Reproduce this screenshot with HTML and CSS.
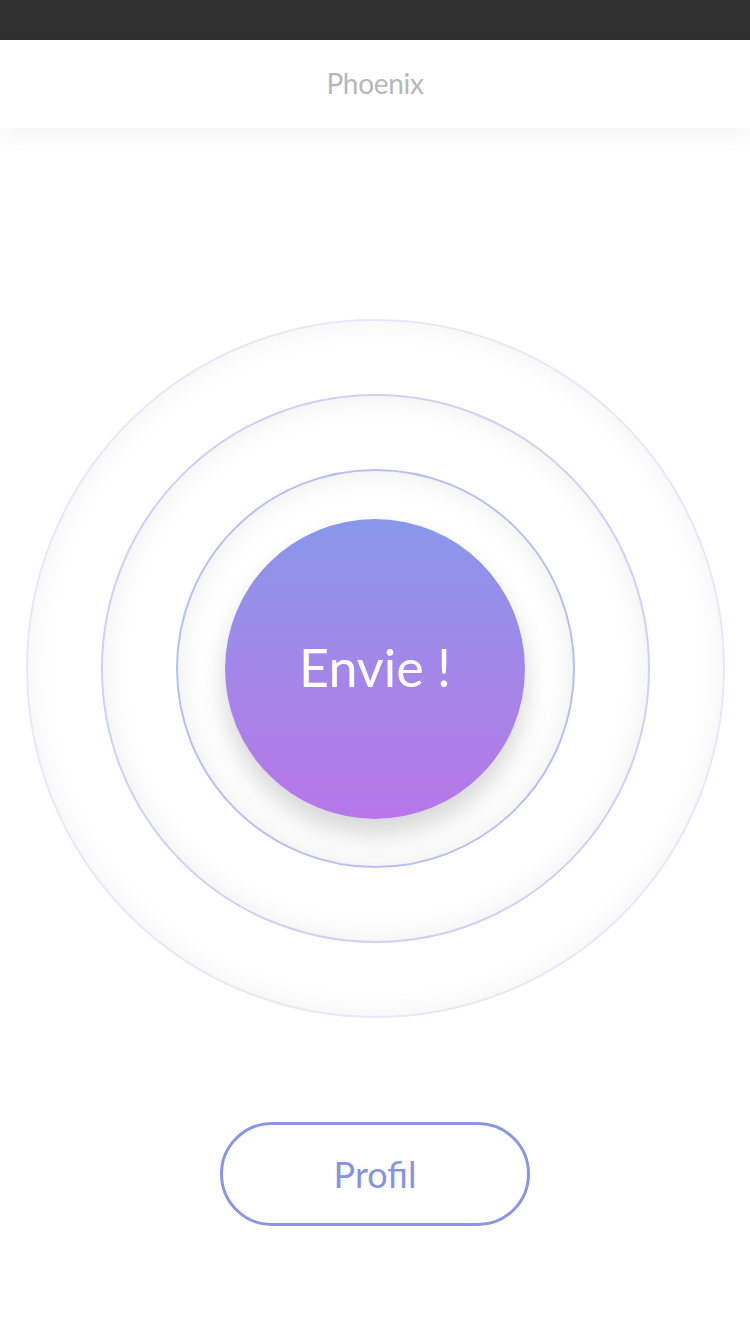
FILE: index.html
```html
<!DOCTYPE html>
<html lang="fr">
<head>
<meta charset="utf-8">
<title>Phoenix</title>
<link rel="stylesheet" href="styles.css">
</head>
<body>
<div class="status-bar"></div>
<header class="app-header"><h1 class="title">Phoenix</h1></header>
<main class="content">
  <div class="ring ring-outer">
    <div class="ring ring-middle">
      <div class="ring ring-inner">
        <button class="core" type="button">Envie !</button>
      </div>
    </div>
  </div>
  <button class="profile-btn" type="button">Profil</button>
</main>
</body>
</html>
```

FILE: styles.css
```css
* { box-sizing: border-box; }
html, body { margin: 0; padding: 0; }
body {
  width: 750px;
  height: 1334px;
  background: #ffffff;
  font-family: Lato, "Open Sans", "Noto Sans", sans-serif;
  overflow: hidden;
}
.status-bar {
  height: 40px;
  background: #303030;
}
.app-header {
  position: relative;
  z-index: 1;
  height: 88px;
  padding-bottom: 3px;
  background: #ffffff;
  display: flex;
  align-items: center;
  justify-content: center;
  box-shadow: 0 8px 22px rgba(0, 0, 0, 0.045);
}
.title {
  margin: 0;
  font-size: 28px;
  font-weight: 400;
  color: #b8b8b8;
  letter-spacing: -0.3px;
}
.content {
  display: flex;
  flex-direction: column;
  align-items: center;
  padding-top: 191px;
}
.ring {
  border-radius: 50%;
  display: flex;
  align-items: center;
  justify-content: center;
  background: #ffffff;
}
.ring-outer {
  width: 699px;
  height: 699px;
  border: 2px solid #e7e7fa;
  box-shadow: inset 0 0 30px rgba(0, 0, 0, 0.055);
}
.ring-middle {
  width: 549px;
  height: 549px;
  border: 2px solid #ccd1f5;
  box-shadow: inset 0 0 30px rgba(0, 0, 0, 0.07);
}
.ring-inner {
  width: 399px;
  height: 399px;
  border: 2px solid #b7bff0;
  box-shadow: inset 0 0 30px rgba(0, 0, 0, 0.08);
}
.core {
  width: 300px;
  height: 300px;
  border: none;
  border-radius: 50%;
  background: linear-gradient(180deg, #8897eb 0%, #a585e8 55%, #b777e8 100%);
  color: #ffffff;
  font-family: Lato, "Open Sans", sans-serif;
  font-size: 52px;
  font-weight: 400;
  padding: 0 0 4px 0;
  box-shadow: 0 16px 26px rgba(0, 0, 0, 0.16);
  cursor: pointer;
}
.profile-btn {
  margin-top: 104px;
  width: 310px;
  height: 104px;
  border: 3px solid #8a96e2;
  border-radius: 52px;
  background: #ffffff;
  color: #8893e0;
  font-family: Lato, "Open Sans", sans-serif;
  font-size: 36px;
  font-weight: 400;
  cursor: pointer;
}
```
